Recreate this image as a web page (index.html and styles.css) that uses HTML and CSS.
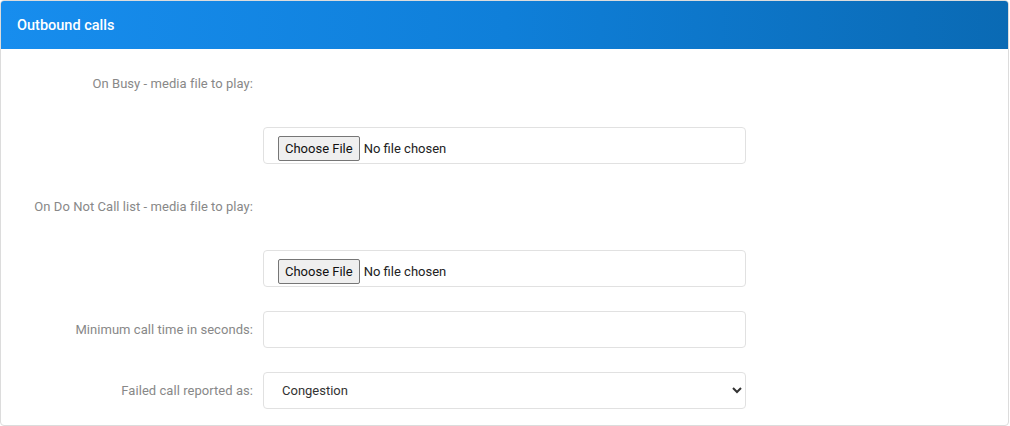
FILE: index.html
```html
<!DOCTYPE html>
<html>
<head>
<meta charset="utf-8">
<link rel="stylesheet" href="styles.css">
</head>
<body>
<div class="card">
  <div class="card-header">Outbound calls</div>
  <div class="card-body">
    <div class="row label-row">
      <label class="lbl">On Busy - media file to play:</label>
    </div>
    <div class="row input-row">
      <div class="ctl file-box"><input type="file" class="file"></div>
    </div>
    <div class="row label-row">
      <label class="lbl">On Do Not Call list - media file to play:</label>
    </div>
    <div class="row input-row">
      <div class="ctl file-box"><input type="file" class="file"></div>
    </div>
    <div class="row input-row">
      <label class="lbl">Minimum call time in seconds:</label>
      <input type="text" class="ctl text">
    </div>
    <div class="row last-row">
      <label class="lbl">Failed call reported as:</label>
      <select class="ctl sel">
        <option>Congestion</option>
      </select>
    </div>
  </div>
</div>
</body>
</html>
```
FILE: styles.css
```css
* { box-sizing: border-box; }
html, body { margin: 0; padding: 0; background: #fff; }
body { font-family: Roboto, "Liberation Sans", sans-serif; }

.card {
  width: 1009px;
  height: 426px;
  border: 1px solid #dcdcdc;
  border-radius: 4px;
  overflow: hidden;
  background: #fff;
}
.card-header {
  height: 48px;
  display: flex;
  align-items: center;
  padding-left: 16px;
  color: #fff;
  font-size: 14.5px;
  font-weight: 500;
  background: linear-gradient(90deg, #178dee 0%, #0f7fd9 50%, #0a6ab4 100%);
}
.card-body {
  padding: 16px 0 0 0;
}
.row {
  display: grid;
  grid-template-columns: 252px 483px;
  column-gap: 10px;
  height: 37px;
  align-items: center;
}
.label-row { margin-bottom: 25px; }
.input-row { margin-bottom: 24px; }
.label-row .lbl { grid-column: 1; }
.input-row .file-box { grid-column: 2; }

.lbl {
  text-align: right;
  color: #888;
  font-size: 13px;
  font-weight: 400;
  letter-spacing: 0.05px;
  white-space: nowrap;
}
.ctl {
  height: 37px;
  width: 483px;
  border: 1px solid #e1e1e1;
  border-radius: 4px;
  background: #fff;
  font-family: Roboto, "Liberation Sans", sans-serif;
  font-size: 13px;
  color: #333;
}
.file-box {
  display: flex;
  align-items: flex-start;
  padding: 8px 0 0 14px;
  overflow: hidden;
}
.file {
  font-family: Roboto, "Liberation Sans", sans-serif;
  font-size: 13px;
  color: #222;
}
.file::file-selector-button {
  height: 25px;
  padding: 0 6px;
  margin-right: 4px;
  font-family: Roboto, "Liberation Sans", sans-serif;
  font-size: 13px;
  color: #111;
  background: #efefef;
  border: 1px solid #767676;
  border-radius: 2px;
}
.text { padding: 0 12px; outline: none; }
.sel {
  padding: 0 8px 0 14px;
  outline: none;
}
```
